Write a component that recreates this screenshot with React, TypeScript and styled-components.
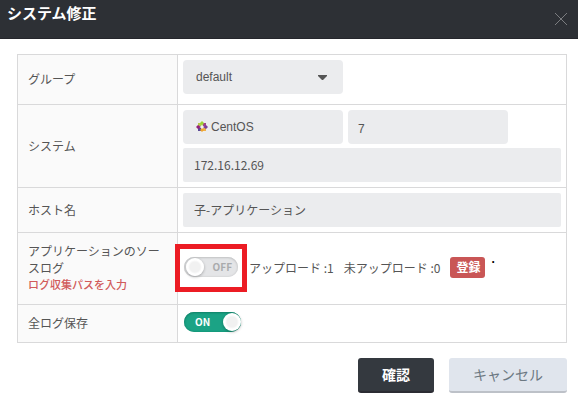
import React from "react";
import styled, { createGlobalStyle } from "styled-components";

const GlobalStyle = createGlobalStyle`
  *, *::before, *::after { box-sizing: border-box; }
  body {
    margin: 0;
    background: #fff;
    color: #555;
    font: 12px/17px "Noto Sans CJK JP", sans-serif;
  }
  input, select, button { font: inherit; color: inherit; margin: 0; }
`;

const Header = styled.header`
  display: flex;
  justify-content: space-between;
  height: 39px;
  padding: 0 10px 0 7px;
  background: #2d3035;
  border-bottom: 1px solid #25262c;
`;

const Title = styled.h1`
  margin: 3px 0 0;
  font-size: 15px;
  line-height: 20px;
  font-weight: 700;
  color: #fff;
`;

const CloseButton = styled.button`
  display: flex;
  margin-top: 12px;
  padding: 0;
  height: 14px;
  border: 0;
  background: none;
  color: #7b7d80;
  cursor: pointer;
`;

const Content = styled.form`
  padding: 15px 11px 9px 17px;
`;

const FormTable = styled.table`
  width: 100%;
  border-collapse: collapse;
  table-layout: fixed;
`;

const Row = styled.tr<{ $height: number }>`
  height: ${(p) => p.$height}px;
`;

const LabelCell = styled.th`
  width: 160px;
  padding: 0 10px 2px;
  border: 1px solid #d9d9da;
  background: #fafafa;
  text-align: left;
  font-weight: 400;
`;

const FieldCell = styled.td<{ $top?: boolean; $switch?: boolean }>`
  padding: ${(p) => (p.$switch ? "5px 5px 8px" : "5px")};
  border: 1px solid #d9d9da;
  vertical-align: ${(p) => (p.$top ? "top" : "middle")};
`;

const Warning = styled.span`
  display: block;
  font-size: 11px;
  font-weight: 500;
  color: #d15b5b;
`;

const FieldGrid = styled.div`
  display: grid;
  grid-template-columns: 160px 160px;
  gap: 5px;
  margin-bottom: 4px;
`;

const SelectBox = styled.div`
  display: grid;
  width: 160px;
  align-items: center;

  & > * { grid-area: 1 / 1; }
  & > svg { justify-self: end; margin-right: 16px; pointer-events: none; }
`;

const Select = styled.select`
  appearance: none;
  width: 100%;
  height: 34px;
  padding: 0 30px 0 13px;
  border: 0;
  border-radius: 4px;
  background: #ebecee;
  font-family: "Liberation Sans", sans-serif;
`;

const IconField = styled.label`
  display: flex;
  align-items: center;
  gap: 3px;
  height: 34px;
  padding: 0 13px;
  border-radius: 4px;
  background: #ebecee;
`;

const BareInput = styled.input`
  flex: 1;
  min-width: 0;
  padding: 0;
  border: 0;
  background: none;
  font-family: "Liberation Sans", sans-serif;
`;

const TextInput = styled.input<{ $latin?: boolean }>`
  display: block;
  width: 100%;
  height: 34px;
  padding: ${(p) => (p.$latin ? "3px 10px 0" : "0 11px 1px")};
  border: 0;
  border-radius: ${(p) => (p.$latin ? 4 : 2)}px;
  background: #ebecee;
  ${(p) => p.$latin && `font-family: "Liberation Sans", sans-serif;`}
`;

const Line = styled.div`
  display: flex;
  align-items: center;
`;

const Counts = styled.div`
  display: flex;
  gap: 10px;
  margin: 0 10px 0 6px;
  white-space: nowrap;
`;

const ToggleSlot = styled.div`
  position: relative;
  width: 59px;
  margin-left: 1px;
`;

const Highlight = styled.div`
  position: absolute;
  inset: -13px -4px -15px -9px;
  border: 5px solid #ec1c24;
  pointer-events: none;
`;

const Toggle = styled.label<{ $on: boolean }>`
  position: relative;
  display: flex;
  align-items: center;
  justify-content: ${(p) => (p.$on ? "flex-start" : "flex-end")};
  width: ${(p) => (p.$on ? 57 : 54)}px;
  height: 20px;
  padding: ${(p) => (p.$on ? "0 11px" : "0 6px")};
  border-radius: 10px;
  background: ${(p) => (p.$on ? "#1ba385" : "#e4e5e7")};
  box-shadow: inset 0 1px 2px ${(p) => (p.$on ? "#12846b" : "#c4c5c7")},
    inset 0 0 2px ${(p) => (p.$on ? "#12846b" : "#c4c5c7")};
  color: ${(p) => (p.$on ? "#fff" : "#aaabad")};
  font: 700 10px/20px "Noto Sans CJK JP", sans-serif;
  cursor: pointer;

  input {
    position: absolute;
    inset: 0;
    width: 100%;
    height: 100%;
    opacity: 0;
    cursor: pointer;
  }
`;

const Knob = styled.span<{ $on: boolean }>`
  position: absolute;
  top: 1px;
  ${(p) => (p.$on ? "right: 0;" : "left: 2px;")}
  width: 18px;
  height: 18px;
  border-radius: 50%;
  background: radial-gradient(circle, #f1f1f1 0 5px, #fff 7px);
  box-shadow: 0 1px 3px rgba(0, 0, 0, 0.3);
`;

const RegisterButton = styled.button`
  height: 21px;
  padding: 0 5px 0 6px;
  border: 0;
  border-radius: 3px;
  background: #c95656;
  color: #fff;
  font-weight: 700;
  line-height: 20px;
  cursor: pointer;
`;

const Dot = styled.span`
  margin: -16px 0 0 6px;
  font: 700 12px/17px "Liberation Sans", sans-serif;
  color: #000;
`;

const Actions = styled.div`
  display: flex;
  justify-content: flex-end;
  gap: 15px;
  margin-top: 15px;
`;

const ActionButton = styled.button<{ $primary?: boolean }>`
  height: 35px;
  padding: 0 24px;
  border: 0;
  border-bottom: 2px solid ${(p) => (p.$primary ? "#2b2c33" : "#bdc1c8")};
  border-radius: 3px;
  background: ${(p) => (p.$primary ? "#34393f" : "#e0e5ed")};
  color: ${(p) => (p.$primary ? "#fff" : "#6c7882")};
  font-size: 14px;
  font-weight: ${(p) => (p.$primary ? 700 : 400)};
  cursor: pointer;
`;

function CentOSIcon() {
  return (
    <svg width="12" height="12" viewBox="0 0 12 12" aria-hidden="true">
      <path d="M2 2h3v3H2z" fill="#b5c94a" />
      <path d="M7 2h3v3H7z" fill="#a1408c" />
      <path d="M7 7h3v3H7z" fill="#efb04a" />
      <path d="M2 7h3v3H2z" fill="#5b4a96" />
      <path d="M4 2l2-2 2 2-2 3z" fill="#9fd335" />
      <path d="M10 4l2 2-2 2-3-2z" fill="#7a3f98" />
      <path d="M8 9l-2 2-2-2 2-2z" fill="#f0a52e" />
      <path d="M2 8L0 6l2-2 3 2z" fill="#932279" />
      <path d="M5 5h2v2H5z" fill="#f6f2e8" />
    </svg>
  );
}

function Switch({ label, defaultOn = false }: { label: string; defaultOn?: boolean }) {
  const [on, setOn] = React.useState(defaultOn);
  return (
    <Toggle $on={on}>
      <input
        type="checkbox"
        role="switch"
        aria-label={label}
        checked={on}
        onChange={(e) => setOn(e.target.checked)}
      />
      {on ? "ON" : "OFF"}
      <Knob $on={on} />
    </Toggle>
  );
}

export default function App() {
  return (
    <>
      <GlobalStyle />
      <Header>
        <Title>システム修正</Title>
        <CloseButton type="button" aria-label="閉じる">
          <svg width="14" height="14" viewBox="0 0 14 14">
            <path d="M1 1l12 12M13 1L1 13" stroke="currentColor" />
          </svg>
        </CloseButton>
      </Header>
      <Content onSubmit={(e) => e.preventDefault()}>
        <FormTable>
          <tbody>
            <Row $height={50}>
              <LabelCell scope="row">
                <label htmlFor="group">グループ</label>
              </LabelCell>
              <FieldCell $top>
                <SelectBox>
                  <Select id="group" defaultValue="default">
                    <option value="default">default</option>
                  </Select>
                  <svg width="9" height="5" viewBox="0 0 9 5" aria-hidden="true">
                    <path d="M0 0h9v1L5 5H4L0 1z" fill="#555" />
                  </svg>
                </SelectBox>
              </FieldCell>
            </Row>
            <Row $height={83}>
              <LabelCell scope="row">システム</LabelCell>
              <FieldCell>
                <FieldGrid>
                  <IconField>
                    <CentOSIcon />
                    <BareInput aria-label="OS" defaultValue="CentOS" />
                  </IconField>
                  <TextInput $latin aria-label="バージョン" defaultValue="7" />
                </FieldGrid>
                <TextInput aria-label="IPアドレス" defaultValue="172.16.12.69" />
              </FieldCell>
            </Row>
            <Row $height={45}>
              <LabelCell scope="row">
                <label htmlFor="host">ホスト名</label>
              </LabelCell>
              <FieldCell>
                <TextInput id="host" defaultValue="子-アプリケーション" />
              </FieldCell>
            </Row>
            <Row $height={72}>
              <LabelCell scope="row">
                アプリケーションのソースログ
                <Warning>ログ収集パスを入力</Warning>
              </LabelCell>
              <FieldCell $switch>
                <Line>
                  <ToggleSlot>
                    <Switch label="アプリケーションのソースログ" />
                    <Highlight />
                  </ToggleSlot>
                  <Counts>
                    <span>アップロード :1</span>
                    <span>未アップロード :0</span>
                  </Counts>
                  <RegisterButton type="button">登録</RegisterButton>
                  <Dot>.</Dot>
                </Line>
              </FieldCell>
            </Row>
            <Row $height={38}>
              <LabelCell scope="row">全ログ保存</LabelCell>
              <FieldCell $switch>
                <ToggleSlot>
                  <Switch label="全ログ保存" defaultOn />
                </ToggleSlot>
              </FieldCell>
            </Row>
          </tbody>
        </FormTable>
        <Actions>
          <ActionButton $primary type="submit">確認</ActionButton>
          <ActionButton type="button">キャンセル</ActionButton>
        </Actions>
      </Content>
    </>
  );
}
